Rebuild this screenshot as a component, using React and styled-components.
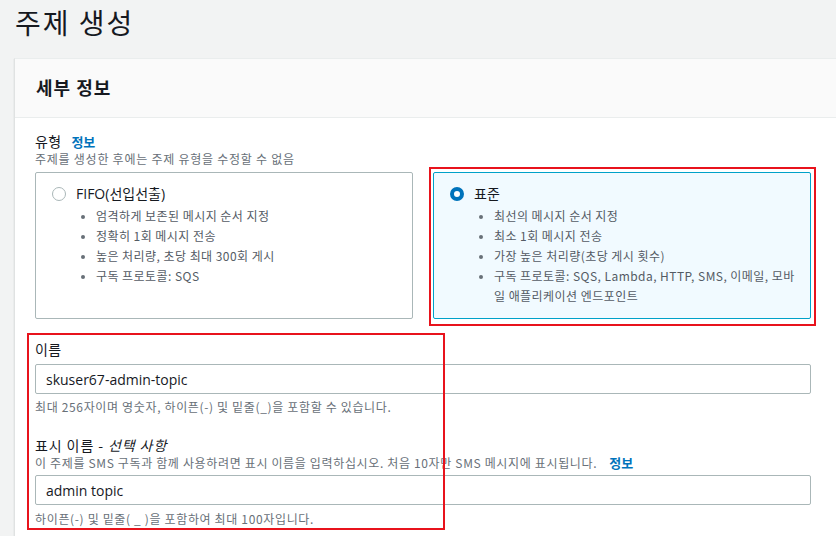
import React from "react";
import styled, { createGlobalStyle } from "styled-components";

const Global = createGlobalStyle`
  html, body { margin: 0; padding: 0; background: #f2f3f3; }
  body { font-family: "Open Sans", "Noto Sans CJK KR", sans-serif; color: #16191f; overflow: hidden; }
  * { box-sizing: border-box; }
`;

const Page = styled.div`
  position: relative;
  width: 836px;
  height: 536px;
  overflow: hidden;
  padding: 0 0 0 14px;
`;

const Title = styled.h1`
  margin: 0;
  padding: 2px 0 0 1px;
  height: 58px;
  font-size: 28px;
  font-weight: 400;
  line-height: 40px;
  letter-spacing: 2px;
  color: #16191f;
  font-family: "Noto Sans CJK KR", sans-serif;
`;

const Panel = styled.section`
  width: 900px;
  background: #fff;
  border-left: 1px solid #e0e2e2;
  border-top: 1px solid #eaeded;
  box-shadow: 0 1px 1px rgba(0, 28, 36, 0.2);
`;

const PanelHeader = styled.div`
  height: 59px;
  background: #fafafa;
  border-bottom: 1px solid #eaeded;
  display: flex;
  align-items: center;
  padding: 0 0 2px 21px;
  font-family: "Noto Sans CJK KR", sans-serif;
  font-size: 18px;
  font-weight: 700;
  letter-spacing: 1px;
  color: #16191f;
`;

const PanelBody = styled.div`
  width: 796px;
  padding: 15px 0 30px 20px;
`;

const Label = styled.div`
  font-family: "Noto Sans CJK KR", sans-serif;
  font-size: 14px;
  line-height: 17px;
  letter-spacing: ${p => p.$ls || 0.3}px;
  color: #16191f;
  display: flex;
  align-items: baseline;
  gap: 10px;
  margin-bottom: ${p => p.$mb || 0}px;
  em { font-style: italic; padding-right: 2px; }
`;

const Info = styled.span`
  color: #0073bb;
  font-weight: 700;
  font-size: 13px;
  letter-spacing: 0;
`;

const Desc = styled.div`
  font-family: "Noto Sans CJK KR", "Open Sans", sans-serif;
  font-size: 12px;
  line-height: 16px;
  letter-spacing: ${p => p.$ls || 0.65}px;
  color: #687078;
  margin-top: ${p => p.$mt || 0}px;
`;

const DescInfo = styled(Info)`
  margin-left: 12px;
`;

const Cards = styled.div`
  display: grid;
  grid-template-columns: 378px 378px;
  column-gap: 20px;
  margin-top: 5px;
`;

const Card = styled.div`
  height: 147px;
  border: 1px solid ${p => (p.$selected ? "#00a1c9" : "#aab7b8")};
  background: ${p => (p.$selected ? "#f1faff" : "#fff")};
  border-radius: 2px;
  padding: 11px 0 0 16px;
`;

const CardHead = styled.div`
  display: flex;
  align-items: center;
  gap: 10px;
  font-family: "Open Sans", "Noto Sans CJK KR", sans-serif;
  font-size: 14px;
  line-height: 20px;
  color: #16191f;
`;

const Radio = styled.span`
  width: 14px;
  height: 14px;
  border-radius: 50%;
  border: ${p => (p.$on ? "4px solid #0073bb" : "1px solid #aab7b8")};
  background: #fff;
  flex: none;
`;

const List = styled.ul`
  margin: 2px 0 0;
  padding: 0 0 0 44px;
  width: 355px;
  font-family: "Noto Sans CJK KR", "Open Sans", sans-serif;
  font-size: 12px;
  line-height: 20px;
  letter-spacing: 0.45px;
  color: #545b64;
  li::marker { color: #687078; font-size: 10px; }
`;

const Field = styled.div`
  margin-top: ${p => p.$mt || 0}px;
`;

const Input = styled.div`
  margin-top: ${p => p.$mt ?? 6}px;
  width: 776px;
  height: 30px;
  border: 1px solid #aab7b8;
  border-radius: 2px;
  background: #fff;
  display: flex;
  align-items: center;
  padding-left: 10px;
  font-family: "Open Sans", sans-serif;
  font-size: 14px;
  color: #16191f;
`;

const Highlight = styled.div`
  position: absolute;
  left: ${p => p.$x}px;
  top: ${p => p.$y}px;
  width: ${p => p.$w}px;
  height: ${p => p.$h}px;
  border: 2px solid #e8131c;
  pointer-events: none;
`;

export default function App() {
  return (
    <>
      <Global />
      <Page>
        <Title>주제 생성</Title>
        <Panel>
          <PanelHeader>세부 정보</PanelHeader>
          <PanelBody>
            <Label>
              유형 <Info>정보</Info>
            </Label>
            <Desc $ls={0.75} $mt={1}>주제를 생성한 후에는 주제 유형을 수정할 수 없음</Desc>
            <Cards>
              <Card>
                <CardHead>
                  <Radio />
                  FIFO(선입선출)
                </CardHead>
                <List>
                  <li>엄격하게 보존된 메시지 순서 지정</li>
                  <li>정확히 1회 메시지 전송</li>
                  <li>높은 처리량, 초당 최대 300회 게시</li>
                  <li>구독 프로토콜: SQS</li>
                </List>
              </Card>
              <Card $selected>
                <CardHead>
                  <Radio $on />
                  표준
                </CardHead>
                <List>
                  <li>최선의 메시지 순서 지정</li>
                  <li>최소 1회 메시지 전송</li>
                  <li>가장 높은 처리량(초당 게시 횟수)</li>
                  <li>
                    구독 프로토콜: SQS, Lambda, HTTP, SMS, 이메일, 모바일 애플리케이션 엔드포인트
                  </li>
                </List>
              </Card>
            </Cards>
            <Field $mt={22}>
              <Label>이름</Label>
              <Input>skuser67-admin-topic</Input>
              <Desc $mt={5}>최대 256자이며 영숫자, 하이픈(-) 및 밑줄(_)을 포함할 수 있습니다.</Desc>
            </Field>
            <Field $mt={22}>
              <Label $ls={0.9} $mb={1}>
                <span>
                  표시 이름 - <em>선택 사항</em>
                </span>
              </Label>
              <Desc>
                이 주제를 SMS 구독과 함께 사용하려면 표시 이름을 입력하십시오. 처음 10자만 SMS 메시지에 표시됩니다.<DescInfo>정보</DescInfo>
              </Desc>
              <Input $mt={4}>admin topic</Input>
              <Desc $mt={6}>하이픈(-) 및 밑줄( _ )을 포함하여 최대 100자입니다.</Desc>
            </Field>
          </PanelBody>
        </Panel>
        <Highlight $x={429} $y={167} $w={387} $h={159} />
        <Highlight $x={27} $y={333} $w={418} $h={197} />
      </Page>
    </>
  );
}
